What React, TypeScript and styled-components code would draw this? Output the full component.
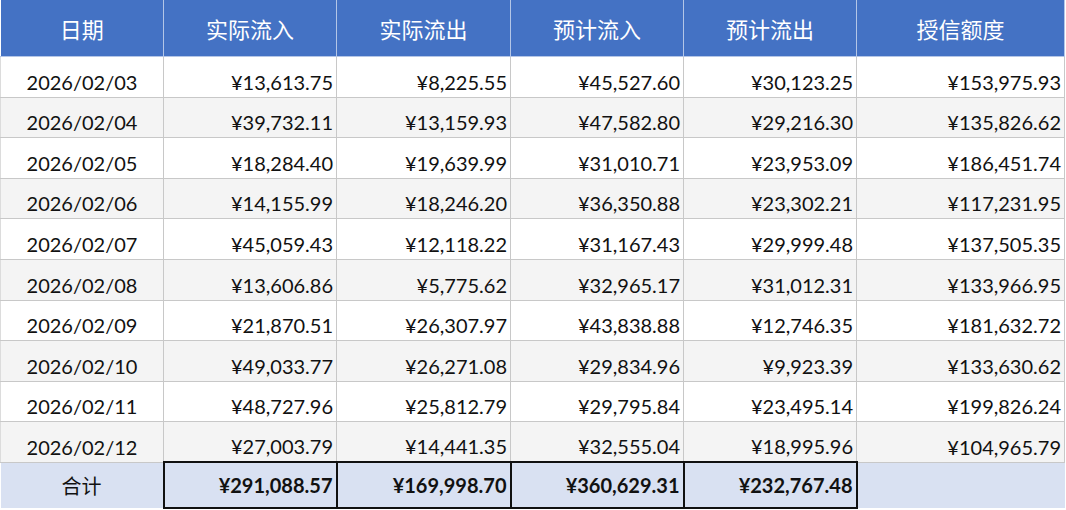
import React from "react";
import styled, { createGlobalStyle } from "styled-components";

const Global = createGlobalStyle`
  html, body { margin: 0; padding: 0; background: #ffffff; }
  body { font-family: Lato, "Noto Sans CJK SC", sans-serif; }
`;

const Table = styled.table`
  width: 1064px;
  border-collapse: collapse;
  table-layout: fixed;
  font-family: Lato, "Noto Sans CJK SC", sans-serif;
  color: #111;
`;

const HeadCell = styled.th`
  height: 56px;
  padding: 0;
  background: #4472c4;
  color: #ffffff;
  font-family: "Noto Sans CJK SC", sans-serif;
  font-weight: 400;
  font-size: 22px;
  text-align: center;
  border: 1px solid #b4c6e7;
  border-top: none;
  &:first-child { border-left: none; }
`;

const BodyRow = styled.tr<{ $alt: boolean }>`
  height: 40.6px;
  background: ${(p) => (p.$alt ? "#f4f4f4" : "#ffffff")};
`;

const Cell = styled.td<{ $align: "center" | "right" }>`
  padding: 0 3px 3px 3px;
  font-size: 20px;
  line-height: 24px;
  vertical-align: bottom;
  text-align: ${(p) => p.$align};
  border: 1px solid #c8c8c8;
  white-space: nowrap;
  &:first-child { border-left: 1px solid #dcdcdc; }
`;

const FootRow = styled.tr`
  height: 46px;
  background: #d9e1f2;
`;

const FootLabel = styled.td`
  font-family: "Noto Sans CJK SC", sans-serif;
  font-size: 20px;
  text-align: center;
  padding: 0;
  border: none;
`;

const FootSum = styled.td`
  font-size: 20px;
  font-weight: 700;
  text-align: right;
  padding: 0 3px;
  border: 2px solid #111;
  white-space: nowrap;
`;

const FootEmpty = styled.td`
  border: none;
  border-left: 2px solid #111;
`;

const headers = ["日期", "实际流入", "实际流出", "预计流入", "预计流出", "授信额度"];
const widths = [163, 173, 174, 173, 173, 208];

const rows: string[][] = [
  ["2026/02/03", "¥13,613.75", "¥8,225.55", "¥45,527.60", "¥30,123.25", "¥153,975.93"],
  ["2026/02/04", "¥39,732.11", "¥13,159.93", "¥47,582.80", "¥29,216.30", "¥135,826.62"],
  ["2026/02/05", "¥18,284.40", "¥19,639.99", "¥31,010.71", "¥23,953.09", "¥186,451.74"],
  ["2026/02/06", "¥14,155.99", "¥18,246.20", "¥36,350.88", "¥23,302.21", "¥117,231.95"],
  ["2026/02/07", "¥45,059.43", "¥12,118.22", "¥31,167.43", "¥29,999.48", "¥137,505.35"],
  ["2026/02/08", "¥13,606.86", "¥5,775.62", "¥32,965.17", "¥31,012.31", "¥133,966.95"],
  ["2026/02/09", "¥21,870.51", "¥26,307.97", "¥43,838.88", "¥12,746.35", "¥181,632.72"],
  ["2026/02/10", "¥49,033.77", "¥26,271.08", "¥29,834.96", "¥9,923.39", "¥133,630.62"],
  ["2026/02/11", "¥48,727.96", "¥25,812.79", "¥29,795.84", "¥23,495.14", "¥199,826.24"],
  ["2026/02/12", "¥27,003.79", "¥14,441.35", "¥32,555.04", "¥18,995.96", "¥104,965.79"],
];

const sums = ["¥291,088.57", "¥169,998.70", "¥360,629.31", "¥232,767.48"];

export default function App() {
  return (
    <>
      <Global />
      <Table>
        <colgroup>
          {widths.map((w, i) => (
            <col key={i} style={{ width: w }} />
          ))}
        </colgroup>
        <thead>
          <tr>
            {headers.map((h) => (
              <HeadCell key={h}>{h}</HeadCell>
            ))}
          </tr>
        </thead>
        <tbody>
          {rows.map((r, i) => (
            <BodyRow key={r[0]} $alt={i % 2 === 1}>
              {r.map((c, j) => (
                <Cell key={j} $align={j === 0 ? "center" : "right"}>
                  {c}
                </Cell>
              ))}
            </BodyRow>
          ))}
        </tbody>
        <tfoot>
          <FootRow>
            <FootLabel>合计</FootLabel>
            {sums.map((s) => (
              <FootSum key={s}>{s}</FootSum>
            ))}
            <FootEmpty />
          </FootRow>
        </tfoot>
      </Table>
    </>
  );
}
